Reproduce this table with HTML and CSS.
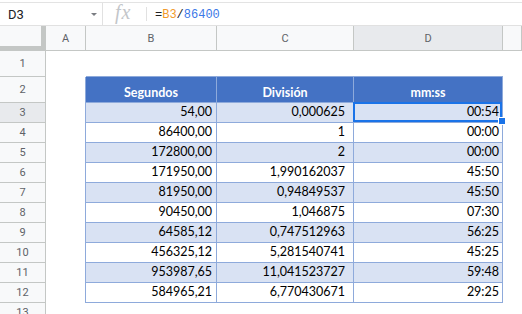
FILE: index.html
```html
<!DOCTYPE html>
<html>
<head>
<meta charset="utf-8">
<link rel="stylesheet" href="styles.css">
</head>
<body>
<div class="formula-bar">
  <div class="name-box"><span class="name">D3</span><span class="arrow"></span></div>
  <div class="fx-area"><span class="fx">fx</span></div>
  <div class="fsep"></div>
  <div class="formula">=<span class="ref">B3</span>/<span class="num">86400</span></div>
</div>
<div class="sheet">
  <div class="corner"></div><div class="ch">A</div><div class="ch">B</div><div class="ch">C</div><div class="ch sel">D</div><div class="ch"></div>

  <div class="rh">1</div><div class="c"></div><div class="c top-edge"></div><div class="c top-edge"></div><div class="c top-edge"></div><div class="c"></div>

  <div class="rh">2</div><div class="c left-edge"></div><div class="t hd">Segundos</div><div class="t hd">División</div><div class="t hd">mm:ss</div><div class="c"></div>

  <div class="rh sel">3</div><div class="c left-edge"></div><div class="t band">54,00</div><div class="t band cc">0,000625</div><div class="t band cd active">00:54<div class="selbox"></div><div class="handle"></div></div><div class="c"></div>

  <div class="rh">4</div><div class="c left-edge"></div><div class="t">86400,00</div><div class="t cc">1</div><div class="t cd">00:00</div><div class="c"></div>

  <div class="rh">5</div><div class="c left-edge"></div><div class="t band">172800,00</div><div class="t band cc">2</div><div class="t band cd">00:00</div><div class="c"></div>

  <div class="rh">6</div><div class="c left-edge"></div><div class="t">171950,00</div><div class="t cc">1,990162037</div><div class="t cd">45:50</div><div class="c"></div>

  <div class="rh">7</div><div class="c left-edge"></div><div class="t band">81950,00</div><div class="t band cc">0,94849537</div><div class="t band cd">45:50</div><div class="c"></div>

  <div class="rh">8</div><div class="c left-edge"></div><div class="t">90450,00</div><div class="t cc">1,046875</div><div class="t cd">07:30</div><div class="c"></div>

  <div class="rh">9</div><div class="c left-edge"></div><div class="t band">64585,12</div><div class="t band cc">0,747512963</div><div class="t band cd">56:25</div><div class="c"></div>

  <div class="rh">10</div><div class="c left-edge"></div><div class="t">456325,12</div><div class="t cc">5,281540741</div><div class="t cd">45:25</div><div class="c"></div>

  <div class="rh">11</div><div class="c left-edge"></div><div class="t band">953987,65</div><div class="t band cc">11,041523727</div><div class="t band cd">59:48</div><div class="c"></div>

  <div class="rh">12</div><div class="c left-edge"></div><div class="t">584965,21</div><div class="t cc">6,770430671</div><div class="t cd">29:25</div><div class="c"></div>

  <div class="rh">13</div><div class="c"></div><div class="c"></div><div class="c"></div><div class="c"></div><div class="c"></div>
</div>
</body>
</html>
```
FILE: styles.css
```css
* { box-sizing: border-box; }
html, body { margin: 0; padding: 0; background: #fff; }
body {
  width: 522px;
  height: 314px;
  overflow: hidden;
  font-family: Roboto, "Liberation Sans", sans-serif;
}

.formula-bar {
  margin-top: 2px;
  height: 24px;
  border-top: 1px solid #e3e3e3;
  border-bottom: 1px solid #e1e1e1;
  display: flex;
  align-items: center;
}
.name-box {
  width: 103px;
  height: 22px;
  border-right: 1px solid #e1e1e1;
  display: flex;
  align-items: center;
  justify-content: space-between;
  padding: 0 5px 0 8px;
}
.name {
  font-size: 13px;
  line-height: 15px;
  color: #202124;
}
.arrow {
  width: 0;
  height: 0;
  border-left: 3px solid transparent;
  border-right: 3px solid transparent;
  border-top: 3px solid #7a7d82;
  margin-top: 1px;
}
.fx-area {
  width: 43px;
  height: 22px;
  padding-left: 12px;
  display: flex;
  align-items: flex-start;
}
.fx {
  font-family: "Liberation Serif", serif;
  font-style: italic;
  font-size: 20px;
  line-height: 16px;
  margin-top: 1px;
  letter-spacing: 1px;
  color: #c3c6ca;
}
.fsep {
  width: 1px;
  height: 14px;
  background: #e1e1e1;
}
.formula {
  margin-left: 8px;
  padding-top: 2px;
  font-family: "Liberation Mono", monospace;
  font-size: 12px;
  line-height: 14px;
  color: #202124;
}
.ref { color: #f29b2c; }
.num { color: #3b78e7; }

.sheet {
  display: grid;
  grid-template-columns: 46px 40px 131px 137px 149px 19px;
  grid-template-rows: 25px 26px 26px repeat(10, 20px) 20px;
}
.corner {
  background: #f8f9fa;
  border-right: 5px solid #c4c7c5;
  border-bottom: 5px solid #c4c7c5;
}
.ch, .rh {
  background: #f8f9fa;
  border-right: 1px solid #c4c7c5;
  border-bottom: 1px solid #c4c7c5;
  display: flex;
  align-items: center;
  justify-content: center;
  font-size: 11px;
  color: #5f6368;
}
.sel { background: #e8eaed; }

.c { background: #fff; }
.top-edge { border-bottom: 1px solid #8eaadb; }
.left-edge { border-right: 1px solid #8eaadb; }

.t {
  border-right: 1px solid #8eaadb;
  border-bottom: 1px solid #8eaadb;
  display: flex;
  align-items: flex-end;
  justify-content: flex-end;
  padding: 0 4px 3px 0;
  font-family: Lato, "Liberation Sans", sans-serif;
  font-size: 12.5px;
  line-height: 15px;
  color: #000;
  white-space: nowrap;
}
.hd {
  background: #4472c4;
  color: #fff;
  font-weight: bold;
  justify-content: center;
  padding: 0 0 2px 0;
}
.band { background: #d9e2f3; }
.cc { padding-right: 8px; }
.cd { padding-right: 3px; }

.active { position: relative; }
.selbox {
  position: absolute;
  top: -1px;
  left: -1px;
  right: 0;
  bottom: 0;
  border: 2px solid #1a73e8;
}
.handle {
  position: absolute;
  width: 8px;
  height: 8px;
  right: -4px;
  bottom: -3px;
  background: #1a73e8;
  border: 1px solid #fff;
}
```
